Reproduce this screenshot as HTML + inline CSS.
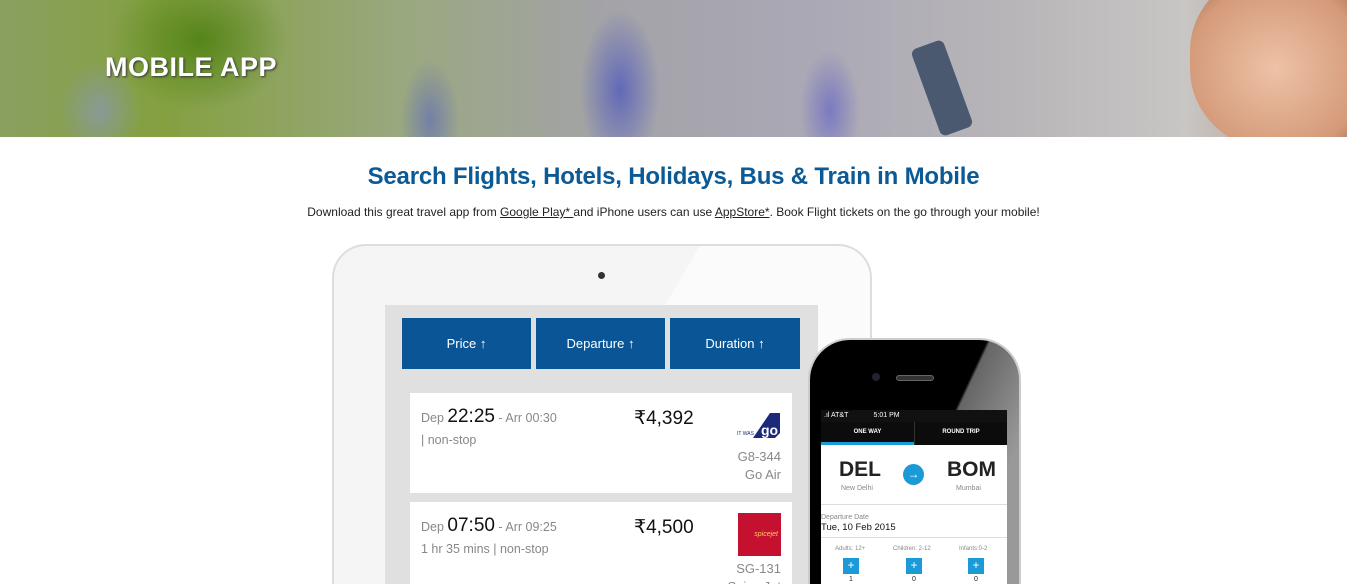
<!DOCTYPE html>
<html style="width:1347px;height:584px;overflow:hidden"><head><meta charset="utf-8"><style>
*{margin:0;padding:0;box-sizing:border-box}
body{width:1347px;height:584px;overflow:hidden;background:#fff;font-family:"Liberation Sans",sans-serif;position:relative}
.banner{position:absolute;left:0;top:0;width:1347px;height:137px;overflow:hidden;
background:
radial-gradient(ellipse 90px 70px at 200px 40px,rgba(80,130,20,.9),transparent),
radial-gradient(ellipse 40px 80px at 620px 90px,rgba(70,80,190,.7),transparent),
radial-gradient(ellipse 30px 60px at 430px 120px,rgba(90,100,190,.6),transparent),
radial-gradient(ellipse 30px 60px at 830px 110px,rgba(90,90,200,.6),transparent),
radial-gradient(ellipse 40px 50px at 100px 110px,rgba(140,150,200,.6),transparent),
linear-gradient(90deg,#8aa060 0%,#84a040 12%,#9aa880 30%,#a3a3a8 45%,#aaa8b5 60%,#b8b5b8 75%,#c8c6c4 88%,#b09080 100%)}
.banner h1{position:absolute;left:105px;top:52px;color:#fff;font-size:27px;font-weight:bold;letter-spacing:.5px;text-shadow:1px 1px 2px #333}
.face{position:absolute;left:1190px;top:-30px;width:190px;height:180px;border-radius:45%;background:radial-gradient(ellipse at 45% 55%,#eec2a6,#d49a7a 60%,#7a4a30)}
.ph{position:absolute;left:925px;top:42px;width:34px;height:92px;background:#4a5870;border-radius:6px;transform:rotate(-20deg)}
h2{position:absolute;top:163px;left:0;width:1347px;text-align:center;color:#0b5a96;font-size:24px;font-weight:bold;letter-spacing:-.2px}
p.t{position:absolute;top:205px;left:0;width:1347px;text-align:center;font-size:12px;color:#222}
p.t u{color:#222}
.tab{position:absolute;left:332px;top:244px;width:540px;height:340px;border:2px solid #ddd;border-bottom:none;border-radius:34px 34px 0 0;background:linear-gradient(120deg,#f5f5f5 50%,#fbfbfb 50%)}
.cam{position:absolute;left:598px;top:272px;width:7px;height:7px;border-radius:50%;background:#333}
.scr{position:absolute;left:385px;top:305px;width:433px;height:279px;background:#e0e0e0}
.btn{position:absolute;top:318px;height:51px;background:#0a5596;color:#fff;font-size:13px;text-align:center;line-height:51px}
.card{position:absolute;left:410px;width:382px;height:100px;background:#fff;color:#888;font-size:12.5px;overflow:hidden}
.card .d{position:absolute;left:11px;top:13px}
.card .d b{font-weight:normal;color:#111;font-size:19px}
.card .s{position:absolute;left:11px;top:40px}
.card .p{position:absolute;left:224px;top:14px;color:#111;font-size:19px}
.card .r{position:absolute;right:11px;text-align:right;font-size:13px;line-height:18px}
.phone{position:absolute;left:808px;top:338px;width:213px;height:246px;border-radius:42px 42px 0 0;background:linear-gradient(115deg,#000 55%,#666 56%,#999 80%);border:2px solid #ccc;border-bottom:none}
.pscr{position:absolute;left:821px;top:410px;width:186px;height:174px;background:#fff;font-size:7px;color:#888;overflow:hidden}
</style></head><body>
<div class="banner"><div class="ph"></div><div class="face"></div><h1>MOBILE APP</h1></div>
<h2>Search Flights, Hotels, Holidays, Bus &amp; Train in Mobile</h2>
<p class="t">Download this great travel app from <u>Google Play* </u>and iPhone users can use <u>AppStore*</u>. Book Flight tickets on the go through your mobile!</p>
<div class="tab"></div><div class="cam"></div>
<div class="scr"></div>
<div class="btn" style="left:402px;width:129px">Price ↑</div>
<div class="btn" style="left:536px;width:129px">Departure ↑</div>
<div class="btn" style="left:670px;width:130px">Duration ↑</div>
<div class="card" style="top:393px"><div class="d">Dep <b>22:25</b> - Arr 00:30</div><div class="s">| non-stop</div><div class="p">₹4,392</div>
<div style="position:absolute;right:12px;top:20px;width:45px;height:25px"><svg width="45" height="25"><polygon points="18,25 35,0 45,0 45,20 40,25" fill="#1d2a7a"/><text x="2" y="22" font-size="5" fill="#1d2a7a">IT WAS</text><text x="26" y="22" font-size="14" font-weight="bold" fill="#fff">go</text></svg></div>
<div class="r" style="top:55px">G8-344<br>Go Air</div></div>
<div class="card" style="top:502px;height:82px"><div class="d">Dep <b>07:50</b> - Arr 09:25</div><div class="s">1 hr 35 mins | non-stop</div><div class="p">₹4,500</div>
<div style="position:absolute;right:11px;top:11px;width:43px;height:43px;background:#c4112f;color:#fc6;font-size:7px;font-style:italic;line-height:43px;text-align:right;padding-right:3px">spicejet</div>
<div class="r" style="top:58px">SG-131<br>Spice Jet</div></div>
<div class="phone"></div>
<div style="position:absolute;left:872px;top:373px;width:8px;height:8px;border-radius:50%;background:#223"></div>
<div style="position:absolute;left:896px;top:375px;width:38px;height:6px;border-radius:3px;background:#333;border:1px solid #666"></div>
<div class="pscr">
<div style="height:12px;background:#111;color:#fff;font-size:7px;line-height:12px;padding-left:3px">.ıl AT&amp;T &nbsp;&nbsp;&nbsp;&nbsp;&nbsp;&nbsp;&nbsp;&nbsp;&nbsp;&nbsp;&nbsp; 5:01 PM</div>
<div style="height:23px;background:#0c0c0c;color:#fff;font-size:6px;font-weight:bold;display:flex"><div style="width:93px;text-align:center;line-height:20px;border-bottom:3px solid #1a9ad6">ONE WAY</div><div style="flex:1;text-align:center;line-height:20px;border-left:1px solid #333">ROUND TRIP</div></div>
<div style="position:absolute;left:18px;top:48px;font-size:21px;font-weight:bold;color:#222">DEL</div>
<div style="position:absolute;left:126px;top:48px;font-size:21px;font-weight:bold;color:#222">BOM</div>
<div style="position:absolute;left:20px;top:75px">New Delhi</div><div style="position:absolute;left:135px;top:75px">Mumbai</div>
<div style="position:absolute;left:82px;top:54px;width:21px;height:21px;border-radius:50%;background:#1a9ad6;color:#fff;text-align:center;line-height:20px;font-size:12px">→</div>
<div style="position:absolute;left:0;top:94px;width:186px;border-top:1px solid #ddd"></div>
<div style="position:absolute;left:0;top:104px">Departure Date</div>
<div style="position:absolute;left:0;top:112px;font-size:9.5px;color:#111">Tue, 10 Feb 2015</div>
<div style="position:absolute;left:0;top:127px;width:186px;border-top:1px solid #ddd"></div>
<div style="position:absolute;left:14px;top:136px;font-size:6px">Adults: 12+</div>
<div style="position:absolute;left:72px;top:136px;font-size:6px">Children: 2-12</div>
<div style="position:absolute;left:138px;top:136px;font-size:6px">Infants:0-2</div>
<div style="position:absolute;left:22px;top:148px;width:16px;height:16px;background:#1a9ad6;color:#fff;text-align:center;font-size:12px;line-height:15px">+</div>
<div style="position:absolute;left:85px;top:148px;width:16px;height:16px;background:#1a9ad6;color:#fff;text-align:center;font-size:12px;line-height:15px">+</div>
<div style="position:absolute;left:147px;top:148px;width:16px;height:16px;background:#1a9ad6;color:#fff;text-align:center;font-size:12px;line-height:15px">+</div>
<div style="position:absolute;left:28px;top:166px;color:#222">1</div><div style="position:absolute;left:91px;top:166px;color:#222">0</div><div style="position:absolute;left:153px;top:166px;color:#222">0</div>
</div>
</body></html>
